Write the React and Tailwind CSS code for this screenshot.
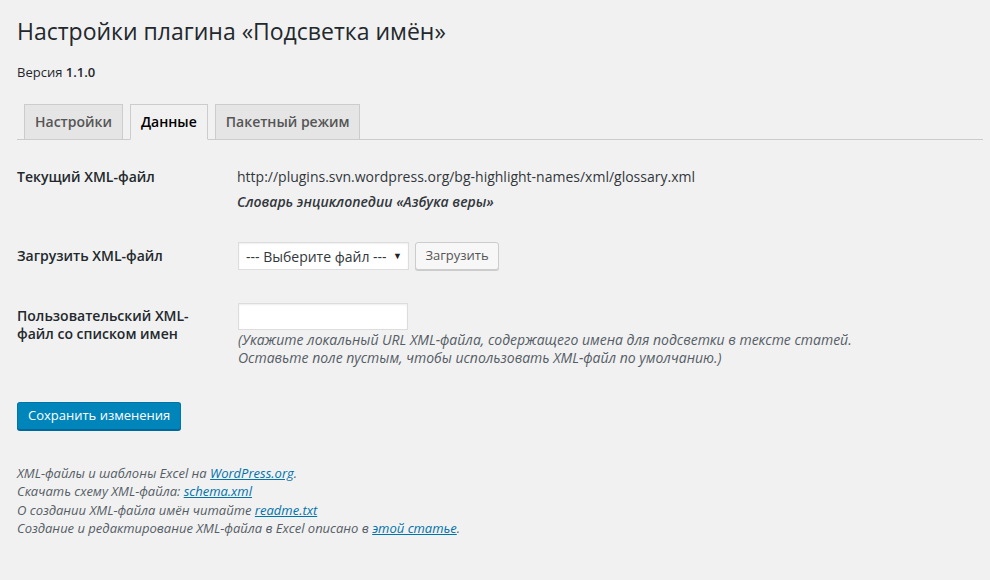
import React from 'react';

const tabs = ['Настройки', 'Данные', 'Пакетный режим'];

const App = () => {
  return (
    <div className="min-h-[580px] bg-[#f1f1f1] pl-[17px] pr-[7px] text-[13px] text-[#444]" style={{ fontFamily: '"Open Sans", sans-serif' }}>
      <h1 className="pt-[17px] text-[23px] leading-[29px] font-normal text-[#23282d]">
        Настройки плагина «Подсветка имён»
      </h1>
      <p className="mt-[17px] leading-[18px] text-[#23282d]">
        Версия <b className="font-semibold">1.1.0</b>
      </p>

      <div className="mt-[23px] flex border-b border-[#ccc] pl-[7px]">
        {tabs.map((tab, i) => (
          <div
            key={tab}
            className={
              i === 1
                ? 'ml-[7px] -mb-px border border-[#ccc] border-b-[#f1f1f1] bg-[#f1f1f1] px-[10px] py-[5px] text-[14px] leading-[24px] font-semibold text-black'
                : 'ml-[7px] first:ml-0 -mb-px border border-[#ccc] bg-[#e5e5e5] px-[10px] py-[5px] text-[14px] leading-[24px] font-semibold text-[#555]'
            }
          >
            {tab}
          </div>
        ))}
      </div>

      <div className="flex pt-[28px]">
        <div className="w-[220px] shrink-0 text-[14px] leading-[18px] font-semibold text-[#23282d]">Текущий XML-файл</div>
        <div>
          <div className="text-[14px] leading-[18px] text-[#32373c]">http://plugins.svn.wordpress.org/bg-highlight-names/xml/glossary.xml</div>
          <div className="mt-[7px] text-[14px] leading-[18px] font-semibold italic text-[#32373c]">Словарь энциклопедии «Азбука веры»</div>
        </div>
      </div>

      <div className="mt-[31px] flex items-center">
        <div className="w-[220px] shrink-0 text-[14px] leading-[18px] font-semibold text-[#23282d]">Загрузить XML-файл</div>
        <div className="flex items-center gap-[6px] pl-px">
          <div className="flex h-[28px] w-[171px] items-center justify-between border border-[#ddd] bg-white pl-[7px] pr-[6px] text-[14px] text-[#32373c] shadow-[inset_0_1px_2px_rgba(0,0,0,0.07)]">
            <span>--- Выберите файл ---</span>
            <span className="text-[9px] text-[#222]">▼</span>
          </div>
          <button className="h-[28px] w-[84px] rounded-[3px] border border-[#ccc] bg-[#f7f7f7] text-[13px] text-[#555] shadow-[0_1px_0_#ccc]">
            Загрузить
          </button>
        </div>
      </div>

      <div className="mt-[33px] flex">
        <div className="w-[220px] shrink-0 pt-[4px] pr-[20px] text-[14px] leading-[18px] font-semibold text-[#23282d]">
          Пользовательский XML-файл со списком имен
        </div>
        <div className="pl-px">
          <div className="h-[27px] w-[170px] border border-[#ddd] bg-white shadow-[inset_0_1px_2px_rgba(0,0,0,0.07)]" />
          <p className="mt-[1px] text-[14px] leading-[17.5px] italic text-[#555d66]">
            (Укажите локальный URL XML-файла, содержащего имена для подсветки в тексте статей.
            <br />
            Оставьте поле пустым, чтобы использовать XML-файл по умолчанию.)
          </p>
        </div>
      </div>

      <button className="mt-[36px] h-[28px] rounded-[3px] border border-[#0073aa] border-b-[#006799] bg-[#0085ba] px-[10px] text-[13px] text-white shadow-[0_1px_0_#006799]">
        Сохранить изменения
      </button>

      <div className="mt-[34px] text-[13px] leading-[18.3px] italic text-[#555d66]">
        <p>XML-файлы и шаблоны Excel на <a className="text-[#0073aa] underline">WordPress.org</a>.</p>
        <p>Скачать схему XML-файла: <a className="text-[#0073aa] underline">schema.xml</a></p>
        <p>О создании XML-файла имён читайте <a className="text-[#0073aa] underline">readme.txt</a></p>
        <p>Создание и редактирование XML-файла в Excel описано в <a className="text-[#0073aa] underline">этой статье</a>.</p>
      </div>
    </div>
  );
};

export default App;
